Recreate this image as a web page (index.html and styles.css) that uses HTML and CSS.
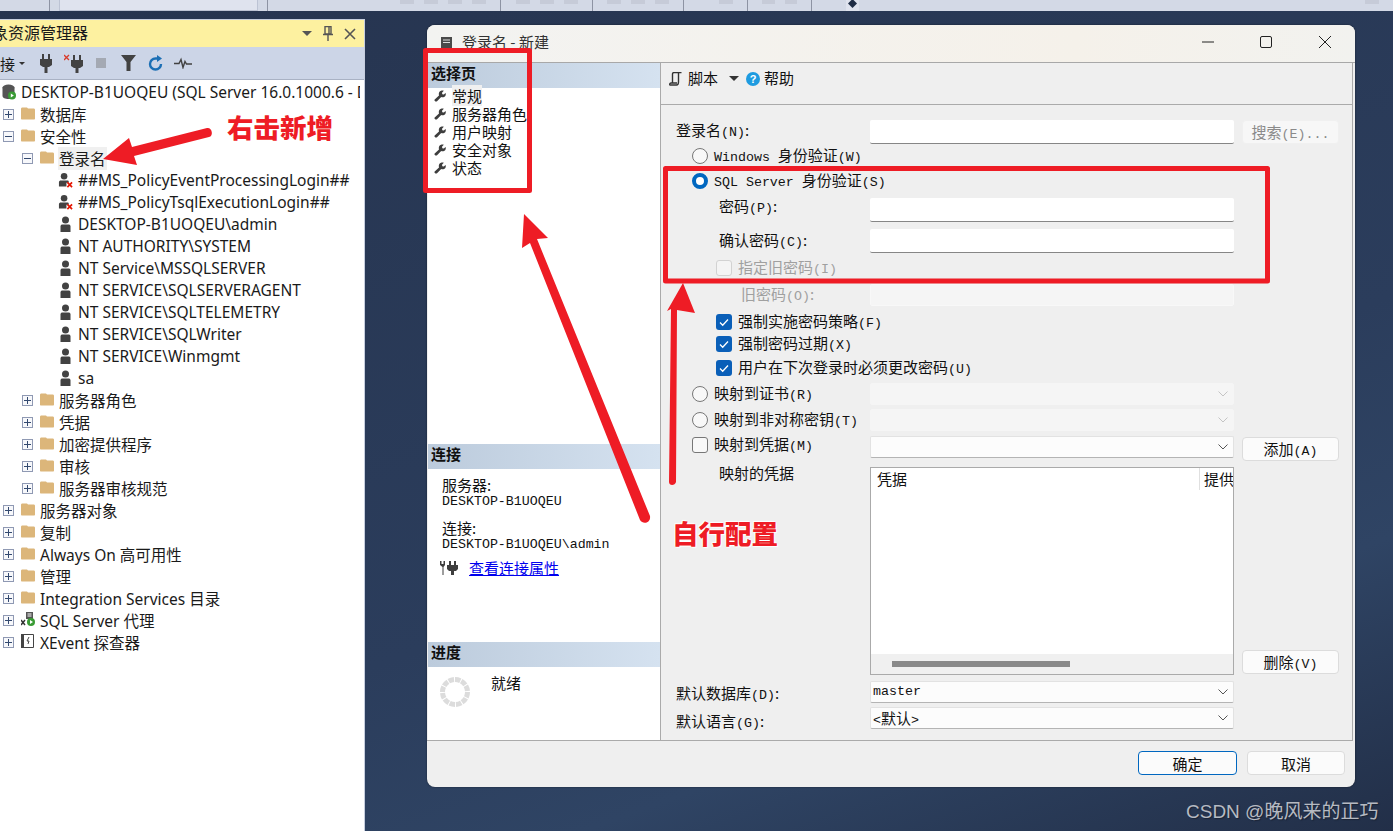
FILE: index.html
```html
<!DOCTYPE html>
<html lang="zh-CN">
<head>
  <meta charset="UTF-8" />
  <title>登录名 - 新建</title>
  <link rel="stylesheet" href="styles.css">
</head>
<body>

  <svg class="sprite" width="0" height="0">
    <symbol id="folder" viewBox="0 0 14 13"><path d="M0 2.5C0 1.5.5 1 1.5 1H6l1 1h5.5c1 0 1.500.5 1.500 1.500V12c0 .6-.4 1-1 1H1c-.6 0-1-.4-1-1z" fill="#dcb67a"/></symbol>
    <symbol id="user" viewBox="0 0 14 16"><circle cx="7" cy="4" r="3.500" fill="#424242"/><path d="M2 16V10.500C2 9 3 8.500 4 8.500h6c1 0 2 .5 2 2V16z" fill="#424242"/></symbol>
    <symbol id="userx" viewBox="0 0 16 16"><circle cx="6.500" cy="4" r="3.500" fill="#424242"/><path d="M1 15V10.500C1 9 2 8.500 3 8.500h7c1 0 1.500.5 1.500 1.500v1H9v4z" fill="#424242"/><path d="M10 10.500l5 5m0-5l-5 5" stroke="#e51400" stroke-width="1.800"/></symbol>
    <symbol id="wrench" viewBox="0 0 12 12"><path d="M1.500 11.500c-1-.5-1.300-1.400-.8-2L5 5.500C4.500 3.500 5 1.500 7 .8c1-.4 2-.3 2.800 0L8 2.700l.3 1.500 1.500.4L11.600 3c.5 1.500 0 3-1.200 3.800-1 .7-2.200.7-3.200.3L3.300 11c-.5.6-1.200.7-1.800.5z" fill="#3e3e3e"/></symbol>
    <symbol id="plug" viewBox="0 0 12 19"><path d="M2 0h2v5H2zM8 0h2v5H8zM0 5h12v6l-3 2H7.500v6h-3v-6H3l-3-2z" fill="#424242"/></symbol>
    <symbol id="chev" viewBox="0 0 10 6"><path d="M.5.500L5 5 9.500.5" fill="none" stroke="currentColor" stroke-width="1"/></symbol>
    <symbol id="check" viewBox="0 0 16 16"><path d="M4 8.500l2.700 2.700L12 5.500" fill="none" stroke="#fff" stroke-width="1.300"/></symbol>
  </svg>

  <div class="top-strip">
    <span></span><i class="sep"></i><span></span><span class="combo"></span><span></span><i class="sep"></i>
    <span class="ghosts"><b></b><b></b><b></b><b></b></span><i class="sep"></i>
    <span class="ghosts"><b></b><b></b><b></b></span><i class="sep"></i>
    <span class="ghosts"><b></b><b></b><b></b></span><i class="sep"></i>
    <span class="ghosts"><b></b></span><i class="sep"></i>
    <span class="ghosts"><b></b><b></b></span><i class="sep"></i>
    <span class="ghosts"><b></b><em class="diamond"></em></span>
  </div>

  <aside class="explorer">
    <div class="explorer-title">
      <span class="explorer-name">象资源管理器</span>
      <span class="tri"></span>
      <svg class="pin" width="10" height="15" viewBox="0 0 10 15"><path d="M2 .5h6v7.500H2zM0 8.500h10M5 9v6M6 1v7" fill="none" stroke="#555" stroke-width="1.400"/></svg>
      <svg class="x" width="12" height="12" viewBox="0 0 12 12"><path d="M1 1l10 10M11 1L1 11" stroke="#555" stroke-width="1.600"/></svg>
    </div>
    <div class="explorer-tools">
      <span class="conn-word">接</span>
      <span class="tri small"></span>
      <svg class="t-plug" width="12" height="19"><use href="#plug"/></svg>
      <svg class="t-unplug" width="19" height="19" viewBox="0 0 19 19"><path d="M0 1l5 5m0-5L0 6" stroke="#d83b2b" stroke-width="1.300"/><path d="M9 1h2v5H9zM15 1h2v5h-2zM7 6h12v6l-3 2h-1.500v5h-3v-5H10l-3-2z" fill="#424242"/></svg>
      <span class="t-stop"></span>
      <svg class="t-filter" width="15" height="16" viewBox="0 0 15 16"><path d="M0 0h15L9.500 7v9h-4V7z" fill="#424242"/></svg>
      <svg class="t-refresh" width="16" height="17" viewBox="0 0 16 17"><path d="M13 9a5.500 5.500 0 1 1-5.500-5.500H10" fill="none" stroke="#1c6fb5" stroke-width="2.400"/><path d="M9 0l5 3.500L9 7z" fill="#1c6fb5"/></svg>
      <svg class="t-pulse" width="18" height="12" viewBox="0 0 18 12"><path d="M0 6.500h5l2-4 2 8 2-6 1.500 2.500H18" fill="none" stroke="#424242" stroke-width="1.400"/></svg>
    </div>
    <ul class="tree">
      <li class="node server">
        <svg width="14" height="16" viewBox="0 0 14 16"><ellipse cx="6.500" cy="3.500" rx="6" ry="3" fill="#555"/><path d="M.5 3.500V12c0 1.700 2.700 3 6 3s6-1.300 6-3V3.500z" fill="#555"/><circle cx="10" cy="11.500" r="4" fill="#3a9b35"/><path d="M8.800 9.500v4l3-2z" fill="#fff"/></svg>
        <span>DESKTOP-B1UOQEU (SQL Server 16.0.1000.6 - DESKTOP-B1UOQEU\admin)</span>
      </li>
      <li class="node"><i class="tog plus"></i><svg class="fld"><use href="#folder"/></svg><span>数据库</span></li>
      <li class="node"><i class="tog"></i><svg class="fld"><use href="#folder"/></svg><span>安全性</span></li>
      <li class="node l1"><i class="tog"></i><svg class="fld"><use href="#folder"/></svg><span class="picked">登录名</span></li>
      <li class="node l2"><svg class="usr"><use href="#userx"/></svg><span>##MS_PolicyEventProcessingLogin##</span></li>
      <li class="node l2"><svg class="usr"><use href="#userx"/></svg><span>##MS_PolicyTsqlExecutionLogin##</span></li>
      <li class="node l2"><svg class="usr"><use href="#user"/></svg><span>DESKTOP-B1UOQEU\admin</span></li>
      <li class="node l2"><svg class="usr"><use href="#user"/></svg><span>NT AUTHORITY\SYSTEM</span></li>
      <li class="node l2"><svg class="usr"><use href="#user"/></svg><span>NT Service\MSSQLSERVER</span></li>
      <li class="node l2"><svg class="usr"><use href="#user"/></svg><span>NT SERVICE\SQLSERVERAGENT</span></li>
      <li class="node l2"><svg class="usr"><use href="#user"/></svg><span>NT SERVICE\SQLTELEMETRY</span></li>
      <li class="node l2"><svg class="usr"><use href="#user"/></svg><span>NT SERVICE\SQLWriter</span></li>
      <li class="node l2"><svg class="usr"><use href="#user"/></svg><span>NT SERVICE\Winmgmt</span></li>
      <li class="node l2"><svg class="usr"><use href="#user"/></svg><span>sa</span></li>
      <li class="node l1"><i class="tog plus"></i><svg class="fld"><use href="#folder"/></svg><span>服务器角色</span></li>
      <li class="node l1"><i class="tog plus"></i><svg class="fld"><use href="#folder"/></svg><span>凭据</span></li>
      <li class="node l1"><i class="tog plus"></i><svg class="fld"><use href="#folder"/></svg><span>加密提供程序</span></li>
      <li class="node l1"><i class="tog plus"></i><svg class="fld"><use href="#folder"/></svg><span>审核</span></li>
      <li class="node l1"><i class="tog plus"></i><svg class="fld"><use href="#folder"/></svg><span>服务器审核规范</span></li>
      <li class="node"><i class="tog plus"></i><svg class="fld"><use href="#folder"/></svg><span>服务器对象</span></li>
      <li class="node"><i class="tog plus"></i><svg class="fld"><use href="#folder"/></svg><span>复制</span></li>
      <li class="node"><i class="tog plus"></i><svg class="fld"><use href="#folder"/></svg><span>Always On 高可用性</span></li>
      <li class="node"><i class="tog plus"></i><svg class="fld"><use href="#folder"/></svg><span>管理</span></li>
      <li class="node"><i class="tog plus"></i><svg class="fld"><use href="#folder"/></svg><span>Integration Services 目录</span></li>
      <li class="node"><i class="tog plus"></i>
        <svg class="fld" viewBox="0 0 14 14"><path d="M5 0h7v7H5z" fill="#555"/><path d="M6.500 2h4M6.500 4h4" stroke="#fff"/><path d="M0 8l4 5m0-5l-4 5" stroke="#333" stroke-width="1.500"/><circle cx="10" cy="10" r="4" fill="#3a9b35"/><path d="M9 8v4l3-2z" fill="#fff"/></svg>
        <span>SQL Server 代理</span></li>
      <li class="node"><i class="tog plus"></i>
        <svg class="fld" viewBox="0 0 14 14"><path d="M.5.500h12v13H.5z" fill="#fff" stroke="#444"/><path d="M0 0h3v14H0z" fill="#444"/><path d="M8 3L6 7h2l-1 3" fill="none" stroke="#444"/></svg>
        <span>XEvent 探查器</span></li>
    </ul>
  </aside>

  <section class="dialog">
    <header class="dlg-title">
      <svg width="11" height="16" viewBox="0 0 11 16"><path d="M0 0h11v16H0z" fill="#4a4a4a"/><path d="M2 3h7M2 5.500h7" stroke="#ddd"/></svg>
      <span class="dlg-name">登录名 - 新建</span>
      <svg class="ctl-min" width="12" height="12" viewBox="0 0 12 12"><path d="M0 6h12" stroke="#222"/></svg>
      <svg class="ctl-max" width="12" height="12" viewBox="0 0 12 12"><rect x=".5" y=".5" width="11" height="11" rx="1.500" fill="none" stroke="#222"/></svg>
      <svg class="ctl-close" width="12" height="12" viewBox="0 0 12 12"><path d="M0 0l12 12M12 0L0 12" stroke="#222"/></svg>
    </header>

    <div class="dlg-body">
      <nav class="side-pane">
        <div class="pane-sec">
          <h3>选择页</h3>
          <ul class="pages">
            <li><svg><use href="#wrench"/></svg><span class="sel">常规</span></li>
            <li><svg><use href="#wrench"/></svg><span>服务器角色</span></li>
            <li><svg><use href="#wrench"/></svg><span>用户映射</span></li>
            <li><svg><use href="#wrench"/></svg><span>安全对象</span></li>
            <li><svg><use href="#wrench"/></svg><span>状态</span></li>
          </ul>
        </div>
        <div class="pane-sec">
          <h3>连接</h3>
          <div class="conn-info">
            <p>服务器:<br><span class="m">DESKTOP-B1UOQEU</span></p>
            <p>连接:<br><span class="m">DESKTOP-B1UOQEU\admin</span></p>
            <div class="conn-link">
              <svg width="19" height="14" viewBox="0 0 19 14"><path d="M0 0h1.500v3h2V0H5v4L3.500 6v8h-1V6L0 4z" fill="#3e3e3e"/><path d="M9 0h2v4h3V0h2v4h2v4l-2 2h-2v4h-3v-4H9L7 8V4h2z" fill="#3e3e3e"/></svg>
              <a href="#">查看连接属性</a>
            </div>
          </div>
        </div>
        <div class="pane-sec">
          <h3>进度</h3>
          <div class="progress">
            <svg width="30" height="30" viewBox="0 0 30 30"><circle cx="15" cy="15" r="12.500" fill="none" stroke="#dcdcdc" stroke-width="5" stroke-dasharray="5.500 1"/></svg>
            <span>就绪</span>
          </div>
        </div>
      </nav>

      <div class="main-pane">
        <div class="tools">
          <svg width="13" height="14" viewBox="0 0 13 14"><path d="M3.500 11V2c0-1 .5-1.500 1.500-1.500h7.500M9.500 1v9c0 2-.5 3-2 3H1c-.5 0-.5-2 1-2h6" fill="none" stroke="#333" stroke-width="1.400"/></svg>
          <span class="t-script">脚本</span>
          <span class="tri"></span>
          <span class="help">?</span>
          <span class="t-help">帮助</span>
        </div>

        <div class="form">
          <label class="lbl">登录名<span class="m">(N)</span>:</label>
          <input class="field" type="text">
          <button class="btn side off">搜索<span class="m">(E)...</span></button>

          <div class="full rad"><i class="radio"></i>
            <span><span class="m">Windows </span>身份验证<span class="m">(W)</span></span></div>
          <div class="full rad"><i class="radio on"></i>
            <span><span class="m">SQL Server </span>身份验证<span class="m">(S)</span></span></div>

          <label class="lbl ind up">密码<span class="m">(P)</span>:</label>
          <input class="field" type="password">
          <label class="lbl ind">确认密码<span class="m">(C)</span>:</label>
          <input class="field" type="password">

          <div class="full chk off"><i class="box"></i><span>指定旧密码<span class="m">(I)</span></span></div>

          <label class="lbl ind2 off">旧密码<span class="m">(O)</span>:</label>
          <div class="field dim"></div>

          <div class="full chk"><i class="box on"><svg><use href="#check"/></svg></i><span>强制实施密码策略<span class="m">(F)</span></span></div>
          <div class="full chk"><i class="box on"><svg><use href="#check"/></svg></i><span>强制密码过期<span class="m">(X)</span></span></div>
          <div class="full chk"><i class="box on"><svg><use href="#check"/></svg></i><span>用户在下次登录时必须更改密码<span class="m">(U)</span></span></div>

          <div class="lbl rad"><i class="radio"></i><span>映射到证书<span class="m">(R)</span></span></div>
          <div class="field select dim"><svg><use href="#chev"/></svg></div>
          <div class="lbl rad"><i class="radio"></i><span>映射到非对称密钥<span class="m">(T)</span></span></div>
          <div class="field select dim"><svg><use href="#chev"/></svg></div>
          <div class="lbl rad"><i class="box square"></i><span>映射到凭据<span class="m">(M)</span></span></div>
          <div class="field select nudge"><svg><use href="#chev"/></svg></div>
          <button class="btn side add">添加<span class="m">(A)</span></button>

          <label class="lbl ind top">映射的凭据</label>
          <div class="field list">
            <div class="list-head"><span class="col-a">凭据</span><span class="col-b">提供程序</span></div>
            <div class="list-scroll"><i></i></div>
          </div>
          <button class="btn side low">删除<span class="m">(V)</span></button>

          <label class="lbl down">默认数据库<span class="m">(D)</span>:</label>
          <div class="field select"><span class="m">master</span><svg><use href="#chev"/></svg></div>
          <label class="lbl down lang">默认语言<span class="m">(G)</span>:</label>
          <div class="field select flush"><span><span class="m">&lt;</span>默认<span class="m">&gt;</span></span><svg><use href="#chev"/></svg></div>
        </div>
      </div>
    </div>

    <footer class="dlg-foot">
      <button class="btn main">确定</button>
      <button class="btn">取消</button>
    </footer>
  </section>

  <!-- 红色标注 -->
  <svg class="marks" width="1393" height="831" viewBox="0 0 1393 831">
    <g fill="none" stroke="#ee1c25" stroke-width="5" stroke-linejoin="round">
      <rect x="425.500" y="50.500" width="104" height="140"/>
      <rect x="665.500" y="168.500" width="602" height="112.500"/>
    </g>
    <g fill="#ee1c25">
      <path d="M103 159L129 138 132 147 207 128C212 127 214 136 209 137L134 156 137 165z"/>
      <path d="M524 214L548 238 537 239 650 516C651 523 643 525 640 520L530 243 522 248z"/>
      <path d="M683 283L695 313 677 310 676 482C675 486 669 486 669 482L671 309 667 311z"/>
    </g>
  </svg>
  <span class="note note-a">右击新增</span>
  <span class="note note-b">自行配置</span>
  <span class="watermark">CSDN @晚风来的正巧</span>

</body>
</html>
```

FILE: styles.css
```css
* {
  box-sizing: border-box;
}

html, body {
  height: 100%;
}

body {
  margin: 0;
  position: relative;
  overflow: hidden;
  color: #1a1a1a;
  font-family: "Noto Sans", "Noto Sans CJK SC", sans-serif;
  background: linear-gradient(160deg, #26344f 0%, #2b3d5c 60%, #2f4464 78%, #222f48 100%);
}

.sprite {
  position: absolute;
}

.tri {
  display: inline-block;
  width: 0;
  height: 0;
  border-left: 5px solid transparent;
  border-right: 5px solid transparent;
  border-top: 5px solid #333;
}

.tri.small {
  border-left-width: 3.500px;
  border-right-width: 3.500px;
  border-top-width: 3.500px;
}

/* 顶部工具条 */
.top-strip {
  height: 11px;
  background: #d3d9e6;
  display: grid;
  grid-template-columns: 49px 1px 9px 199px 9px 1px 232px 1px 91px 1px 90px 1px 63px 1px 63px 1px 1fr;
}

.combo {
  background: #dfe3ee;
  border: 1px solid #bcc3d4;
  border-top: none;
}

.sep {
  background: #8d93a3;
}

.ghosts {
  display: flex;
  justify-content: flex-end;
  gap: 10px;
  padding: 0 14px;
  position: relative;
}

.ghosts b {
  width: 14px;
  height: 4px;
  background: #c6cbd8;
}

.diamond {
  position: absolute;
  left: 34px;
  top: 0;
  width: 13px;
  height: 11px;
  background: #dfe3ee;
}

.diamond::after {
  content: "";
  position: absolute;
  left: 2px;
  top: -1px;
  width: 9px;
  height: 9px;
  background: #1f2d45;
  clip-path: polygon(50% 0, 100% 50%, 50% 100%, 0 50%);
}

/* 对象资源管理器 */
.explorer {
  width: 365px;
  height: 812px;
  margin-top: 8px;
  border-right: 1px solid #c6cede;
  border-top: 1px solid #c6cede;
  display: flex;
  flex-direction: column;
  background: #fff;
  overflow: hidden;
}

.explorer-title {
  height: 27px;
  flex: none;
  background: #fdf1a0;
  display: flex;
  align-items: center;
  color: #1a1a1a;
}

.explorer-name {
  font-size: 16px;
  margin: -4px 0 0 -8px;
  width: 310px;
  white-space: nowrap;
}

.explorer-title .tri {
  border-top-color: #555;
  margin-right: 11px;
}

.explorer-title .x {
  margin-left: 11px;
}

.explorer-tools {
  height: 33px;
  flex: none;
  background: #ccd5e7;
  border-bottom: 1px solid #a9b2c4;
  display: flex;
  align-items: center;
  font-size: 15px;
}

.conn-word { width: 19px; }
.t-plug { margin-left: 15px; }
.t-unplug { margin-left: 12px; }

.t-stop {
  width: 10px;
  height: 10px;
  margin-left: 13px;
  background: #a4a9b3;
}

.t-filter { margin-left: 15px; }
.t-refresh { margin-left: 12px; }
.t-pulse { margin-left: 10px; }

.tree {
  list-style: none;
  margin: 0;
  padding: 1px 0 0;
  font-size: 15.500px;
  color: #1a1a1a;
  width: 360px;
  overflow: hidden;
}

.node {
  height: 22px;
  display: flex;
  align-items: center;
  white-space: nowrap;
  padding-left: 3px;
}

.node.server { padding-left: 2px; gap: 5px; }
.node.server svg { flex: none; }
.node.l1 { padding-left: 22px; }
.node.l2 { padding-left: 58px; }

.tog {
  flex: none;
  width: 11px;
  height: 11px;
  border: 1px solid #8f99b3;
  background: linear-gradient(#33496f, #33496f) center / 7px 1px no-repeat, #f7f8fb;
  margin-right: 7px;
}

.tog.plus {
  background: linear-gradient(#33496f, #33496f) center / 7px 1px no-repeat,
    linear-gradient(#33496f, #33496f) center / 1px 7px no-repeat, #f7f8fb;
}

.fld {
  flex: none;
  width: 14px;
  height: 14px;
  margin-right: 5px;
  margin-top: -3px;
}

.usr {
  flex: none;
  width: 15px;
  height: 16px;
  margin-right: 5px;
}

.picked {
  background: #f0f0f0;
  padding: 0 1px;
  margin-left: -1px;
}

/* 弹窗 */
.dialog {
  position: absolute;
  left: 427px;
  top: 25px;
  width: 928px;
  height: 762px;
  border-radius: 8px;
  background: #efefef;
  overflow: hidden;
  box-shadow: 0 0 2px rgba(0, 0, 0, 0.5);
  font-family: "Noto Sans CJK SC", sans-serif;
  font-size: 15px;
  color: #111;
}

.m {
  font-family: "Liberation Mono", monospace;
  font-size: 13.300px;
}

.dlg-title {
  height: 38px;
  border-bottom: 1px solid #a8a8a8;
  background: linear-gradient(90deg, #f3f3f1, #f5f1ea 70%, #f2f2ef);
  display: flex;
  align-items: center;
  padding-left: 14px;
  padding-top: 2px;
}

.dlg-name {
  margin: -7px 0 0 10px;
  color: #333;
  width: 739px;
}

.ctl-min { margin-left: 1px; margin-top: -5px; }
.ctl-max { margin-left: 46px; margin-top: -5px; }
.ctl-close { margin-left: 47px; margin-top: -5px; }

.dlg-body {
  height: 678px;
  display: flex;
  border-bottom: 1px solid #aaa;
  margin-right: 2px;
}

.side-pane {
  width: 233px;
  flex: none;
  background: #fff;
  border-right: 1px solid #aaa;
  margin-left: 1px;
  display: grid;
  grid-template-rows: 381px 198px 1fr;
}

.side-pane h3 {
  margin: 0;
  height: 25px;
  line-height: 19px;
  padding-left: 3px;
  font-size: 15px;
  font-weight: 700;
  background: linear-gradient(90deg, #bccbdc, #d5e2f0);
}

.pages {
  list-style: none;
  margin: -2px 0 0;
  padding: 0 0 0 6px;
}

.pages li {
  height: 18px;
  display: flex;
  align-items: center;
  white-space: nowrap;
}

.pages svg {
  width: 12px;
  height: 12px;
  margin: 2px 6px 0 0;
  flex: none;
}

.pages .sel {
  background: #f0f0f0;
}

.conn-info {
  padding: 9px 0 0 14px;
  line-height: 14px;
}

.conn-info p {
  margin: 0 0 12px;
}

.conn-link {
  display: flex;
  align-items: center;
  gap: 10px;
  margin-left: -2px;
  margin-top: -3px;
}

.conn-link a {
  color: #0000ee;
}

.progress {
  display: flex;
  align-items: flex-start;
  padding: 10px 0 0 12px;
}

.progress span {
  margin-left: 21px;
  margin-top: -5px;
}

.main-pane {
  flex: 1;
  display: flex;
  flex-direction: column;
  border-right: 1px solid #aaa;
}

.tools {
  height: 42px;
  flex: none;
  border-bottom: 1px solid #aaa;
  display: flex;
  align-items: center;
  padding: 0 0 10px 8px;
}

.t-script { margin: -3px 11px 0 6px; }
.t-help { margin-top: -3px; }

.help {
  width: 14px;
  height: 14px;
  margin: 0 4px 0 7px;
  border-radius: 50%;
  background: #1e9be0;
  color: #fff;
  font: 700 11px/14px "Liberation Sans", sans-serif;
  text-align: center;
}

.form {
  display: grid;
  grid-template-columns: 186px 364px 97px;
  column-gap: 8px;
  grid-template-rows: 25px 24px 25px 33px 30px 23px 32px 21px 24px 23px 29px 23px 28px 217px 31px 26px;
  padding: 14px 0 0 15px;
  align-items: center;
  white-space: nowrap;
}

.full {
  grid-column: 1 / -1;
}

.lbl {
  grid-column: 1;
  padding-bottom: 4px;
}

.field {
  grid-column: 2;
  height: 24px;
  background: #fff;
  border: none;
  border-bottom: 1px solid #868686;
  border-radius: 2px;
  padding: 0;
  outline: none;
}

.ind { padding-left: 43px; }
.ind2 { padding-left: 65px; }
.up { margin-top: -5px; }
.off { color: #a0a0a0; }
.top { align-self: start; margin-top: 3px; }
.down { margin-top: 5px; }
.lang { margin-top: 4px; }

.rad, .chk {
  display: flex;
  align-items: center;
  padding-bottom: 0;
}

.rad > span, .chk > span {
  margin-top: -3px;
}

.rad { padding-left: 16px; gap: 6px; }
.chk { padding-left: 40px; gap: 6px; }

.radio {
  width: 16px;
  height: 16px;
  flex: none;
  border-radius: 50%;
  border: 1px solid #777;
  background: #f8f8f8;
}

.radio.on {
  border: 4.500px solid #0067c0;
  background: #fff;
}

.box {
  width: 16px;
  height: 16px;
  flex: none;
  border-radius: 3px;
  border: 1px solid #d2d2d2;
  background: #f4f4f4;
}

.box.square {
  border-color: #777;
  background: #f8f8f8;
}

.box.on {
  border: none;
  background: #0a5fb8;
}

.box svg {
  display: block;
  width: 16px;
  height: 16px;
}

.field.dim {
  background: #f5f5f5;
  border: 1px solid #f8f8f8;
  border-bottom-color: #f8f8f8;
  color: #c0c0c0;
  height: 22px;
}

.field.select {
  height: 22px;
  background: #fcfcfc;
  border: 1px solid #e2e2e2;
  border-bottom-color: #b4b4b4;
  color: #555;
  display: flex;
  align-items: center;
  justify-content: space-between;
  padding: 0 5px 0 2px;
}

.field.select > span {
  color: #111;
  margin-top: -1px;
}

.field.select svg {
  width: 10px;
  height: 6px;
  margin-left: auto;
}

.field.select.dim {
  color: #c4c4c4;
  background: #f5f5f5;
  border-color: #f5f5f5;
}

.nudge { margin-top: 4px; }
.flush { align-self: start; }

.field.list {
  height: 208px;
  align-self: start;
  margin-top: 8px;
  border: 1px solid #aaa;
  display: flex;
  flex-direction: column;
  justify-content: space-between;
  border-radius: 0;
  overflow: hidden;
}

.list-head {
  height: 22px;
  display: flex;
  line-height: 22px;
}

.col-a {
  width: 328px;
  padding-left: 6px;
  flex: none;
}

.col-b {
  border-left: 1px solid #e0e0e0;
  padding-left: 4px;
}

.list-scroll {
  height: 20px;
  background: #f0f0f0;
  padding: 7px 0 0 21px;
}

.list-scroll i {
  display: block;
  width: 178px;
  height: 6px;
  background: #8a8a8a;
}

.btn {
  font: inherit;
  height: 24px;
  padding: 0;
  background: #fbfbfb;
  border: 1px solid #dcdcdc;
  border-radius: 4px;
  color: #111;
}

.side {
  grid-column: 3;
  width: 97px;
  padding-bottom: 4px;
}

.btn.off {
  background: #f7f7f7;
  border-color: #f0f0f0;
  color: #8a8a8a;
}

.low {
  align-self: end;
  margin-bottom: 2px;
}

.add {
  align-self: end;
  margin-bottom: -2px;
}

.dlg-foot {
  display: flex;
  justify-content: flex-end;
  gap: 10px;
  padding: 10px 10px 0 0;
}

.dlg-foot .btn {
  width: 98px;
}

.btn.main {
  width: 99px;
  border: 1.500px solid #0067c0;
}

/* 标注 */
.marks {
  position: absolute;
  left: 0;
  top: 0;
  pointer-events: none;
}

.note {
  position: absolute;
  font-family: "Noto Sans CJK SC", sans-serif;
  font-size: 26.500px;
  line-height: 30px;
  font-weight: 900;
  color: #ee1c25;
  white-space: nowrap;
  text-shadow: 0 0 2px #fff, 0 0 2px #fff, 1px 1px 1px #fff, -1px -1px 1px #fff;
}

.note-a { left: 227px; top: 112px; }
.note-b { left: 672px; top: 518px; }

.watermark {
  position: absolute;
  left: 1186px;
  top: 799px;
  font-family: "Liberation Sans", "Noto Sans CJK SC", sans-serif;
  font-size: 19px;
  line-height: 26px;
  color: #b6bac2;
  text-shadow: 1px 1px 1px #1a2436;
  white-space: nowrap;
}
```
